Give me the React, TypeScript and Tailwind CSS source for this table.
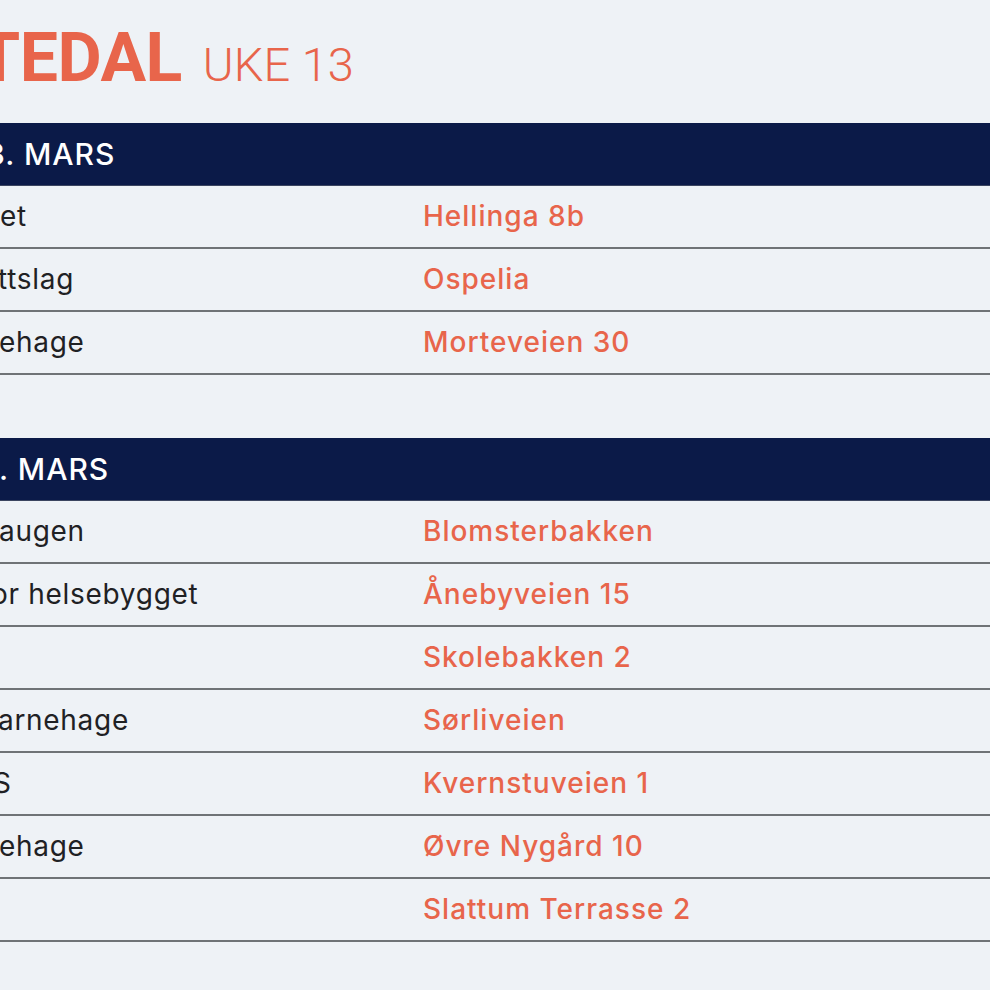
const font = "font-['Inter','Liberation_Sans',sans-serif]";

type Row = { place: string; shift: string; address: string };

const days: { title: string; shift: string; rows: Row[] }[] = [
  {
    title: "3. MARS",
    shift: "-ml-[14px]",
    rows: [
      { place: "et", shift: "ml-0", address: "Hellinga 8b" },
      { place: "ttslag", shift: "-ml-[2px]", address: "Ospelia" },
      { place: "ehage", shift: "-ml-[1px]", address: "Morteveien 30" },
    ],
  },
  {
    title: ". MARS",
    shift: "-ml-[1px]",
    rows: [
      { place: "augen", shift: "-ml-[1px]", address: "Blomsterbakken" },
      { place: "or helsebygget", shift: "-ml-[9px]", address: "Ånebyveien 15" },
      { place: "", shift: "ml-0", address: "Skolebakken 2" },
      { place: "arnehage", shift: "-ml-[2px]", address: "Sørliveien" },
      { place: "S", shift: "-ml-[7px]", address: "Kvernstuveien 1" },
      { place: "ehage", shift: "-ml-[1px]", address: "Øvre Nygård 10" },
      { place: "", shift: "ml-0", address: "Slattum Terrasse 2" },
    ],
  },
];

export default function App() {
  return (
    <div className={`w-[990px] h-[990px] overflow-hidden bg-[#eef2f6] ${font}`}>
      {/* tittel */}
      <div className="h-[123px] pt-[24px] flex items-baseline font-['Roboto','Liberation_Sans',sans-serif]">
        <span className="-ml-[22px] text-[68px] leading-none font-bold text-[#e8654b] tracking-[-0.5px]">
          TEDAL
        </span>
        <span className="ml-[21px] text-[47px] leading-none font-light text-[#e8654b]">
          UKE 13
        </span>
      </div>

      {days.map((day, i) => (
        <div key={i} className={i > 0 ? "mt-[63px]" : ""}>
          <div className="h-[63px] bg-[#0b1a48] flex items-center border-b border-[#3b4560]">
            <span className={`${day.shift} text-[30px] font-medium text-white tracking-[1px]`}>
              {day.title}
            </span>
          </div>
          {day.rows.map((row, j) => (
            <div
              key={j}
              className="h-[63px] border-b-2 border-[#6f7376] flex items-center pb-[1px]"
            >
              <div className="w-[423px] overflow-hidden">
                <span className={`${row.shift} block text-[28px] tracking-[0.7px] text-[#1f2124] whitespace-nowrap`}>
                  {row.place || "\u00a0"}
                </span>
              </div>
              <span className="text-[28px] tracking-[1px] font-medium text-[#e8654b] whitespace-nowrap">
                {row.address}
              </span>
            </div>
          ))}
        </div>
      ))}
    </div>
  );
}
